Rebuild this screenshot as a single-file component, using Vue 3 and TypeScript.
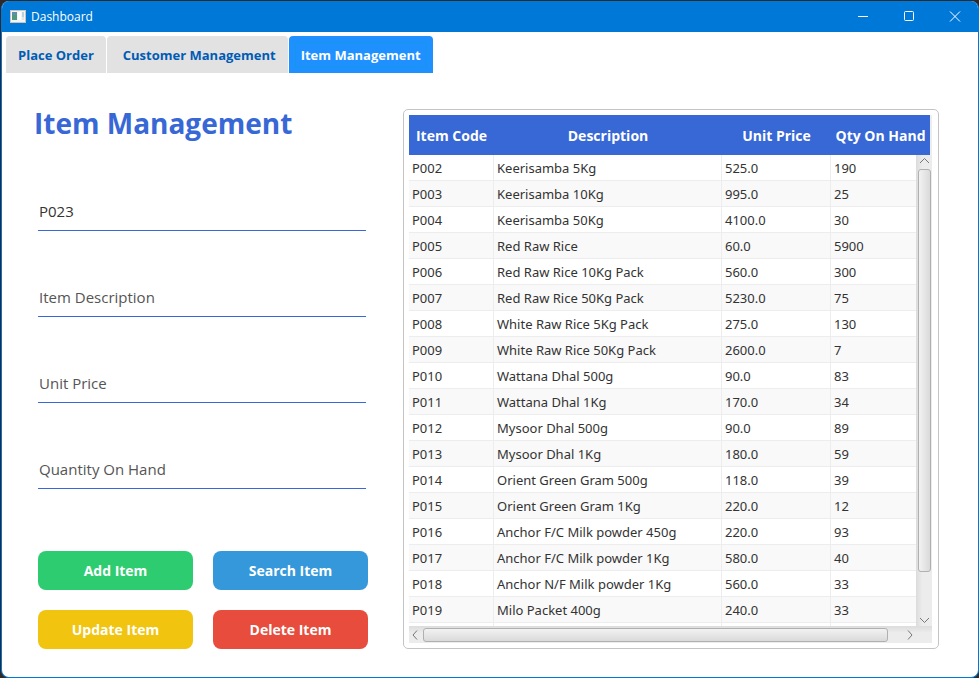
<script setup lang="ts">
import { ref } from 'vue'

interface Item {
  code: string
  description: string
  price: string
  qty: string
}

const tabs = ['Place Order', 'Customer Management', 'Item Management']
const activeTab = ref('Item Management')

const code = ref('P023')
const description = ref('')
const unitPrice = ref('')
const quantity = ref('')

const items: Item[] = [
  { code: 'P002', description: 'Keerisamba 5Kg', price: '525.0', qty: '190' },
  { code: 'P003', description: 'Keerisamba 10Kg', price: '995.0', qty: '25' },
  { code: 'P004', description: 'Keerisamba 50Kg', price: '4100.0', qty: '30' },
  { code: 'P005', description: 'Red Raw Rice', price: '60.0', qty: '5900' },
  { code: 'P006', description: 'Red Raw Rice 10Kg Pack', price: '560.0', qty: '300' },
  { code: 'P007', description: 'Red Raw Rice 50Kg Pack', price: '5230.0', qty: '75' },
  { code: 'P008', description: 'White Raw Rice 5Kg Pack', price: '275.0', qty: '130' },
  { code: 'P009', description: 'White Raw Rice 50Kg Pack', price: '2600.0', qty: '7' },
  { code: 'P010', description: 'Wattana Dhal 500g', price: '90.0', qty: '83' },
  { code: 'P011', description: 'Wattana Dhal 1Kg', price: '170.0', qty: '34' },
  { code: 'P012', description: 'Mysoor Dhal 500g', price: '90.0', qty: '89' },
  { code: 'P013', description: 'Mysoor Dhal 1Kg', price: '180.0', qty: '59' },
  { code: 'P014', description: 'Orient Green Gram 500g', price: '118.0', qty: '39' },
  { code: 'P015', description: 'Orient Green Gram 1Kg', price: '220.0', qty: '12' },
  { code: 'P016', description: 'Anchor F/C Milk powder 450g', price: '220.0', qty: '93' },
  { code: 'P017', description: 'Anchor F/C Milk powder 1Kg', price: '580.0', qty: '40' },
  { code: 'P018', description: 'Anchor N/F Milk powder 1Kg', price: '560.0', qty: '33' },
  { code: 'P019', description: 'Milo Packet 400g', price: '240.0', qty: '33' },
  { code: '', description: '', price: '', qty: '' },
]
</script>

<template>
  <div class="desktop">
    <div class="window">
      <header class="titlebar">
        <svg class="app-icon" width="16" height="14" viewBox="0 0 16 14" aria-hidden="true">
          <rect x="0.5" y="0.5" width="15" height="12" fill="#f4f4f4" stroke="#c9c5c0" />
          <rect x="2" y="2" width="5" height="8" fill="#4f9a7c" />
          <rect x="2" y="2" width="5" height="3" fill="#5f8fae" />
          <rect x="8" y="2" width="3" height="8" fill="#fff" />
          <rect x="12" y="2" width="2" height="5" fill="#b9d3dd" />
          <rect x="12" y="7" width="2" height="3" fill="#dfe6e4" />
        </svg>
        <span class="app-name">Dashboard</span>
        <button type="button" class="win-btn" aria-label="Minimize">
          <svg width="12" height="12" viewBox="0 0 12 12"><path d="M1 5.500h10" /></svg>
        </button>
        <button type="button" class="win-btn" aria-label="Maximize">
          <svg width="12" height="12" viewBox="0 0 12 12"><rect x="1.5" y="0.5" width="9" height="9" rx="1" /></svg>
        </button>
        <button type="button" class="win-btn" aria-label="Close">
          <svg width="12" height="12" viewBox="0 0 12 12"><path d="M1 0.500l10 10M11 0.500L1 10.500" /></svg>
        </button>
      </header>

      <nav class="tabs" role="tablist">
        <button
          v-for="tab in tabs"
          :key="tab"
          type="button"
          role="tab"
          class="tab"
          :class="{ active: tab === activeTab }"
          :aria-selected="tab === activeTab"
          @click="activeTab = tab"
        >
          <span class="tab-label">{{ tab }}</span>
        </button>
      </nav>

      <main class="content">
        <section class="editor">
          <h1 class="title">Item Management</h1>
          <form class="form" @submit.prevent>
            <div class="fields">
              <input v-model="code" class="field" type="text" placeholder="Item Code" aria-label="Item Code" />
              <input v-model="description" class="field" type="text" placeholder="Item Description" aria-label="Item Description" />
              <input v-model="unitPrice" class="field" type="text" placeholder="Unit Price" aria-label="Unit Price" />
              <input v-model="quantity" class="field" type="text" placeholder="Quantity On Hand" aria-label="Quantity On Hand" />
            </div>
            <div class="actions">
              <button type="button" class="action add">Add Item</button>
              <button type="button" class="action search">Search Item</button>
              <button type="button" class="action update">Update Item</button>
              <button type="button" class="action delete">Delete Item</button>
            </div>
          </form>
        </section>

        <section class="panel">
          <div class="viewport">
            <table class="items">
              <colgroup>
                <col class="col-code" />
                <col />
                <col class="col-price" />
                <col class="col-qty" />
              </colgroup>
              <thead>
                <tr>
                  <th scope="col">Item Code</th>
                  <th scope="col">Description</th>
                  <th scope="col">Unit Price</th>
                  <th scope="col">Qty On Hand</th>
                </tr>
              </thead>
              <tbody>
                <tr v-for="(item, i) in items" :key="i">
                  <td>{{ item.code }}</td>
                  <td>{{ item.description }}</td>
                  <td>{{ item.price }}</td>
                  <td>{{ item.qty }}</td>
                </tr>
              </tbody>
            </table>
          </div>
          <div class="vbar" aria-hidden="true">
            <svg width="16" height="14" viewBox="0 0 16 14"><path d="M4 8l4.500-4.500L13 8" /></svg>
            <div class="track"><div class="thumb"></div></div>
            <svg width="16" height="14" viewBox="0 0 16 14"><path d="M4 6l4.500 4.500L13 6" /></svg>
          </div>
          <div class="hbar" aria-hidden="true">
            <svg width="14" height="17" viewBox="0 0 14 17"><path d="M8 4.500L4 9L8 13.500" /></svg>
            <div class="track"><div class="thumb"></div></div>
            <svg width="14" height="17" viewBox="0 0 14 17"><path d="M6 4.500l4 4.500L6 13.500" /></svg>
          </div>
        </section>
      </main>
    </div>
  </div>
</template>

<style>
body {
  margin: 0;
  background: #2e2a2b;
}
</style>

<style scoped>
.desktop {
  box-sizing: border-box;
  height: 100vh;
  padding: 1px 0 0 1px;
  font-family: 'Segoe UI', 'Open Sans', 'Noto Sans', sans-serif;
  font-size: 13px;
  color: #333;
}
.desktop button,
.desktop input {
  font-family: inherit;
}
.window {
  box-sizing: border-box;
  height: 100%;
  display: flex;
  flex-direction: column;
  overflow: hidden;
  border: 1px solid #0078d7;
  border-top: 0;
  border-radius: 8px;
  background: #fff;
}
.titlebar {
  display: flex;
  align-items: center;
  height: 31px;
  flex: none;
  padding-left: 8px;
  background: #0078d7;
  color: #fff;
}
.app-name {
  flex: 1;
  padding-left: 5px;
  font-size: 12px;
}
.win-btn {
  display: flex;
  align-items: center;
  justify-content: center;
  width: 46px;
  height: 31px;
  padding: 0;
  border: 0;
  background: none;
}
.win-btn svg {
  fill: none;
  stroke: #fff;
}
.tabs {
  display: flex;
  flex: none;
  gap: 1px;
  padding: 4px 4px 0;
}
.tab {
  height: 37px;
  padding: 0 6px;
  border: 0;
  border-radius: 4px 4px 0 0;
  background: #e2e2e2;
  color: #005bb5;
  font-size: 13px;
  font-weight: 700;
}
.tab:nth-child(2) {
  padding-left: 10px;
}
.tab-label {
  display: block;
  padding: 2px 5px;
  border: 1px solid transparent;
  border-radius: 2px;
  line-height: 20px;
}
.tab.active {
  background: #1e90ff;
  color: #fff;
}
.tab.active .tab-label {
  border-color: #1299e6;
}
.content {
  flex: 1;
  min-height: 0;
  display: grid;
  grid-template-columns: 335px minmax(0, 1fr);
  gap: 34px;
  padding: 36px 39px 28px 32px;
}
.editor {
  display: flex;
  flex-direction: column;
}
.title {
  margin: 0;
  padding-bottom: 54px;
  color: #3867d6;
  font-size: 28px;
  line-height: 28px;
  white-space: nowrap;
}
.form {
  flex: 1;
  display: flex;
  flex-direction: column;
  justify-content: space-between;
  padding: 0 1px 0 4px;
}
.fields {
  display: grid;
  gap: 46px;
  padding-right: 2px;
}
.field {
  box-sizing: border-box;
  width: 100%;
  height: 40px;
  padding: 0 1px;
  border: 0;
  border-bottom: 1px solid #3867d6;
  outline: 0;
  background: none;
  color: #333;
  font-size: 15px;
}
.field::placeholder {
  color: #555;
  opacity: 1;
}
.actions {
  display: grid;
  grid-template-columns: 1fr 1fr;
  gap: 20px;
}
.action {
  height: 39px;
  padding: 0;
  border: 0;
  border-radius: 8px;
  color: #fff;
  font-size: 14px;
  font-weight: 700;
}
.add {
  background: #2ecc71;
}
.search {
  background: #3498db;
}
.update {
  background: #f1c40f;
}
.delete {
  background: #e74c3c;
}
.panel {
  display: grid;
  grid-template-columns: minmax(0, 1fr) 16px;
  grid-template-rows: 40px minmax(0, 1fr) 17px;
  min-height: 0;
  padding: 5px 6px 5px 5px;
  border: 1px solid #c4c4c4;
  border-radius: 5px;
}
.viewport {
  grid-column: 1 / 3;
  grid-row: 1 / 3;
  overflow: hidden;
  padding-right: 2px;
  background: linear-gradient(to left, #eee 2px, #fff 2px);
}
.items {
  width: 100%;
  table-layout: fixed;
  border-collapse: separate;
  border-spacing: 0;
}
.col-code {
  width: 85px;
}
.col-price {
  width: 109px;
}
.col-qty {
  width: 99px;
}
.items th {
  height: 40px;
  padding: 1px 0 0;
  box-sizing: border-box;
  background: #3867d6;
  color: #fff;
  font-size: 14px;
  line-height: 21px;
  white-space: nowrap;
}
.items td {
  box-sizing: border-box;
  height: 26px;
  padding: 0 3px;
  border-right: 1px solid #ededed;
  border-bottom: 1px solid #ededed;
  font-family: 'Segoe UI', 'Noto Sans', 'Open Sans', sans-serif;
  line-height: 20px;
  white-space: nowrap;
}
.items tbody tr:nth-child(even) {
  background: #f9f9f9;
}
.vbar {
  grid-column: 2;
  grid-row: 2;
  display: flex;
  flex-direction: column;
  background: linear-gradient(to right, #dcdcdc, #ececec 40%);
}
.hbar {
  grid-column: 1 / 3;
  grid-row: 3;
  display: flex;
  padding-right: 16px;
  background: linear-gradient(#dcdcdc, #ececec 40%);
}
.vbar svg,
.hbar svg {
  flex: none;
  fill: none;
  stroke: #777;
}
.track {
  flex: 1;
  display: flex;
}
.vbar .track {
  flex-direction: column;
  padding: 0 1px 0 2px;
}
.hbar .track {
  padding: 2px 0 1px;
}
.thumb {
  box-sizing: border-box;
  border: 1px solid #b0b0b0;
  border-radius: 3px;
}
.vbar .thumb {
  height: 91%;
  background: linear-gradient(to right, #f2f2f2, #dadada);
}
.hbar .thumb {
  width: 97%;
  background: linear-gradient(#f2f2f2, #dadada);
}
</style>
